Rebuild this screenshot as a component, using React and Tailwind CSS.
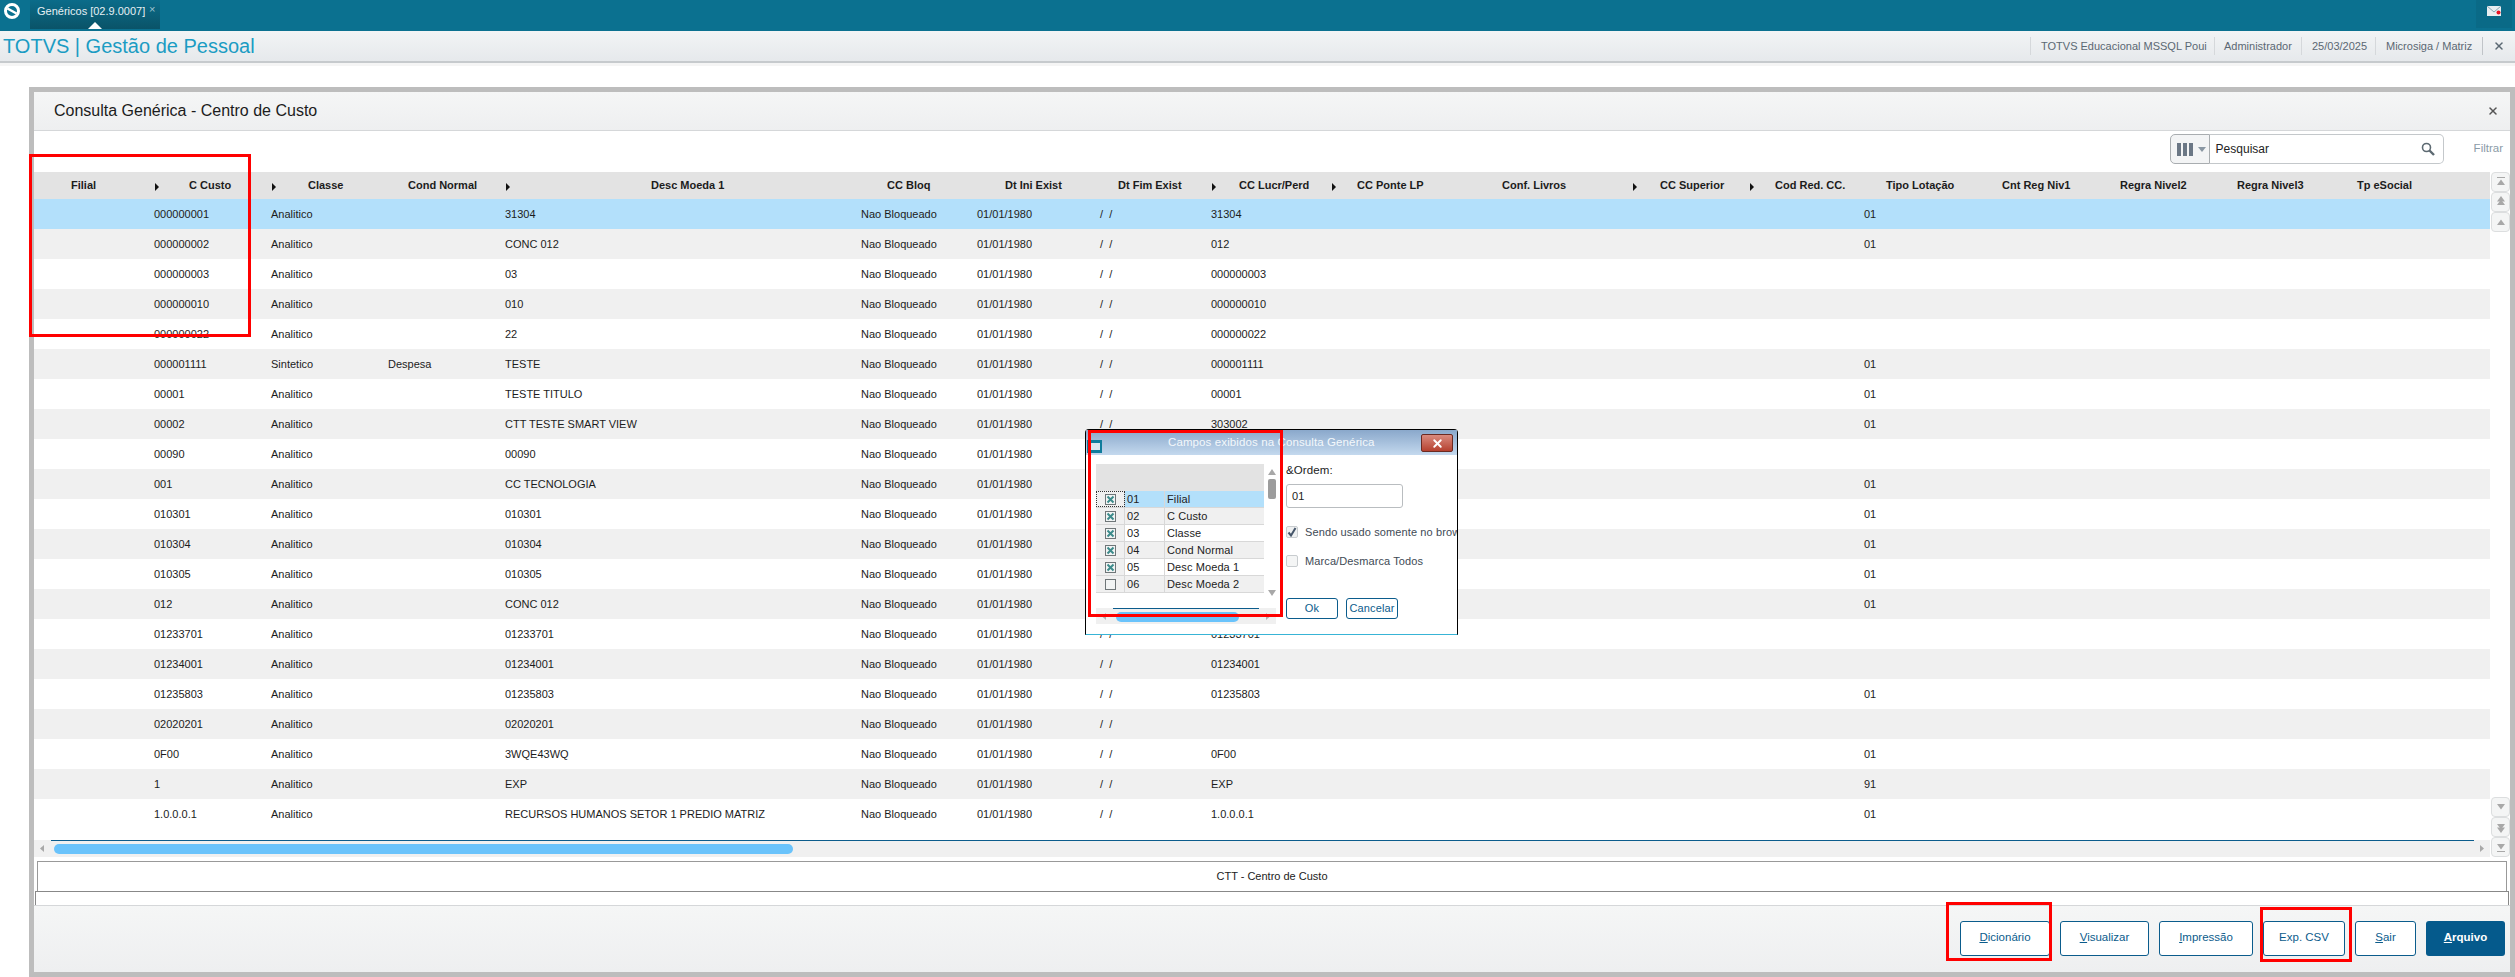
import { X } from 'lucide-react';

const columns = [
    { name: 'Filial', track: 'pl-[37px]' },
    { name: 'C Custo', track: 'pl-[37px]', caret: true },
    { name: 'Classe', track: 'pl-[39px]', caret: true },
    { name: 'Cond Normal', track: 'pl-[22px]' },
    { name: 'Desc Moeda 1', track: 'pl-[148px]', caret: true },
    { name: 'CC Bloq', track: 'pl-[28px]' },
    { name: 'Dt Ini Exist', track: 'pl-[30px]' },
    { name: 'Dt Fim Exist', track: 'pl-[20px]' },
    { name: 'CC Lucr/Perd', track: 'pl-[30px]', caret: true },
    { name: 'CC Ponte LP', track: 'pl-[28px]', caret: true },
    { name: 'Conf. Livros', track: 'pl-[55px]' },
    { name: 'CC Superior', track: 'pl-[30px]', caret: true },
    { name: 'Cod Red. CC.', track: 'pl-[28px]', caret: true },
    { name: 'Tipo Lotação', track: 'pl-[24px]' },
    { name: 'Cnt Reg Niv1', track: 'pl-[23px]' },
    { name: 'Regra Nivel2', track: 'pl-[24px]' },
    { name: 'Regra Nivel3', track: 'pl-[24px]' },
    { name: 'Tp eSocial', track: 'pl-[27px]' },
];

const gridCols =
    'grid grid-cols-[118px_117px_117px_117px_356px_116px_123px_111px_120px_118px_183px_117px_115px_117px_117px_117px_117px_160px]';

// codigo, classe, cond, descricao, lucr/perd, tipo lotacao
const rows = [
    ['000000001', 'Analitico', '', '31304', '31304', '01'],
    ['000000002', 'Analitico', '', 'CONC 012', '012', '01'],
    ['000000003', 'Analitico', '', '03', '000000003', ''],
    ['000000010', 'Analitico', '', '010', '000000010', ''],
    ['000000022', 'Analitico', '', '22', '000000022', ''],
    ['000001111', 'Sintetico', 'Despesa', 'TESTE', '000001111', '01'],
    ['00001', 'Analitico', '', 'TESTE TITULO', '00001', '01'],
    ['00002', 'Analitico', '', 'CTT TESTE SMART VIEW', '303002', '01'],
    ['00090', 'Analitico', '', '00090', '', ''],
    ['001', 'Analitico', '', 'CC TECNOLOGIA', '', '01'],
    ['010301', 'Analitico', '', '010301', '', '01'],
    ['010304', 'Analitico', '', '010304', '', '01'],
    ['010305', 'Analitico', '', '010305', '', '01'],
    ['012', 'Analitico', '', 'CONC 012', '', '01'],
    ['01233701', 'Analitico', '', '01233701', '01233701', ''],
    ['01234001', 'Analitico', '', '01234001', '01234001', ''],
    ['01235803', 'Analitico', '', '01235803', '01235803', '01'],
    ['02020201', 'Analitico', '', '02020201', '', ''],
    ['0F00', 'Analitico', '', '3WQE43WQ', '0F00', '01'],
    ['1', 'Analitico', '', 'EXP', 'EXP', '91'],
    ['1.0.0.0.1', 'Analitico', '', 'RECURSOS HUMANOS SETOR 1 PREDIO MATRIZ', '1.0.0.0.1', '01'],
];

const campos = [
    ['01', 'Filial', true],
    ['02', 'C Custo', true],
    ['03', 'Classe', true],
    ['04', 'Cond Normal', true],
    ['05', 'Desc Moeda 1', true],
    ['06', 'Desc Moeda 2', false],
];

function Caret() {
    return (
        <svg width="5" height="8" viewBox="0 0 5 8" className="absolute left-[3px] top-[11px]">
            <polygon points="0,0 4,4 0,8" fill="#111" />
        </svg>
    );
}

function ScrollBtn({ dir, double, bar }) {
    const flip = dir === 'down' ? 'rotate-180' : '';
    return (
        <div className="w-[19px] h-[20px] bg-[#f4f5f5] border border-[#dcdedf] flex items-center justify-center rounded-sm">
            <svg width="8" height="12" viewBox="0 0 8 12" className={flip}>
                {bar && <rect x="0" y="1" width="8" height="1" fill="#a8a8a8" />}
                <polygon points="4,3.5 8,9 0,9" fill="#a8a8a8" />
                {double && <polygon points="4,0 8,5.5 0,5.5" fill="#a8a8a8" />}
            </svg>
        </div>
    );
}

function Botao({ label, sublinha, largura }) {
    return (
        <button className={`h-[35px] ${largura} bg-white border border-[#0b5c8c] rounded-[3px] text-[11.5px] text-[#0b5c8c]`}>
            <span className="underline">{sublinha}</span>
            {label}
        </button>
    );
}

function Marca({ checked }) {
    return (
        <svg width="11" height="11" viewBox="0 0 11 11">
            <rect x="0.5" y="0.5" width="10" height="10" fill="#f2f4f4" stroke="#6f7678" />
            {checked && (
                <path d="M2.5 2.5 L8.5 8.5 M8.5 2.5 L2.5 8.5" stroke="#3d8b8b" strokeWidth="2" />
            )}
        </svg>
    );
}

function Dialogo() {
    return (
        <div className="absolute left-[1085px] top-[429px] w-[373px] h-[206px] bg-white border border-black border-b-[#38b4d6] rounded-t-[4px] text-[11px] tracking-[0.01em] text-[#222]">
            <div className="h-[25px] bg-gradient-to-b from-[#8aa8cb] to-[#c4d9ee] relative flex items-center pl-[82px] text-[11.5px] text-[#f4f8fb] font-medium">
                Campos exibidos na Consulta Genérica
                <div className="absolute left-[1px] top-[10px] w-[15px] h-[13px] bg-[#0f7c9c] flex items-center justify-center">
                    <div className="w-[11px] h-[7px] bg-[#dbe6ee]" />
                </div>
                <div className="absolute left-[335px] top-[4px] w-[32px] h-[18px] bg-gradient-to-b from-[#d98a7e] to-[#b5402f] border border-[#6b2a22] rounded-[2px] flex items-center justify-center">
                    <X className="w-[13px] h-[13px] text-white" strokeWidth={3.5} />
                </div>
            </div>
            <div className="flex pl-[10px] pt-[9px]">
                <div className="w-[180px]">
                    <div className="flex h-[144px]">
                        <div className="w-[168px]">
                            <div className="h-[27px] bg-[#e3e3e3]" />
                            {campos.map(([num, nome, marcado], i) => (
                                <div
                                    key={num}
                                    className={`h-[17px] flex items-center border-b border-[#d8d8d8] ${
                                        i === 0 ? 'bg-[#b3e0fb]' : i % 2 === 1 ? 'bg-[#f0f0f0]' : 'bg-white'
                                    }`}
                                >
                                    <div
                                        className={`w-[29px] h-full flex items-center justify-center bg-[#f0f0f0] border-r border-[#d8d8d8] ${
                                            i === 0 ? 'outline-1 outline-dotted outline-[#333] -outline-offset-1' : ''
                                        }`}
                                    >
                                        <Marca checked={marcado} />
                                    </div>
                                    <div className="w-[40px] h-full flex items-center pl-[2px] border-r border-[#d8d8d8]">{num}</div>
                                    <div className="pl-[2px]">{nome}</div>
                                </div>
                            ))}
                        </div>
                        <div className="w-[12px] flex flex-col items-center pl-[3px]">
                            <svg width="8" height="6" viewBox="0 0 8 6" className="mt-[5px]">
                                <polygon points="4,0 8,6 0,6" fill="#a8a8a8" />
                            </svg>
                            <div className="w-[8px] h-[20px] bg-[#9c9c9c] rounded-[2px] mt-[4px]" />
                            <svg width="8" height="6" viewBox="0 0 8 6" className="mt-[91px]">
                                <polygon points="0,0 8,0 4,6" fill="#a8a8a8" />
                            </svg>
                        </div>
                    </div>
                    <div className="relative h-[16px] bg-[#f0f0f0] flex items-center justify-between px-[6px]">
                        <div className="absolute left-[17px] right-[17px] top-0 h-px bg-[#0b5c8c]" />
                        <svg width="4" height="7" viewBox="0 0 4 7">
                            <polygon points="0,3.5 4,0 4,7" fill="#b0b0b0" />
                        </svg>
                        <div className="absolute left-[20px] top-[4px] w-[123px] h-[10px] bg-[#6ac3fb] rounded-full" />
                        <svg width="4" height="7" viewBox="0 0 4 7">
                            <polygon points="4,3.5 0,0 0,7" fill="#b0b0b0" />
                        </svg>
                    </div>
                </div>
                <div className="ml-[10px] flex-1 overflow-hidden whitespace-nowrap">
                    <div className="text-[11.5px] leading-[12px]">&amp;Ordem:</div>
                    <div className="w-[117px] h-[24px] mt-[8px] border border-[#b9bdc0] rounded-[3px] flex items-center pl-[5px]">01</div>
                    <div className="flex items-center mt-[18px] h-[12px]">
                        <div className="w-[12px] h-[12px] bg-[#eef0f1] border border-[#c8cccf] rounded-[2px] flex items-center justify-center">
                            <svg width="10" height="10" viewBox="0 0 10 10">
                                <path d="M1.5 5.5 L4 8.5 L8.5 1" fill="none" stroke="#46566a" strokeWidth="2" />
                            </svg>
                        </div>
                        <span className="ml-[7px] text-[#3e4a55]">Sendo usado somente no brow</span>
                    </div>
                    <div className="flex items-center mt-[17px] h-[12px]">
                        <div className="w-[12px] h-[12px] bg-[#f4f5f5] border border-[#c8cccf] rounded-[2px]" />
                        <span className="ml-[7px] text-[#3e4a55]">Marca/Desmarca Todos</span>
                    </div>
                    <div className="flex gap-[8px] mt-[31px]">
                        <button className="w-[52px] h-[21px] border border-[#0b5c8c] rounded-[3px] text-[#0b5c8c] text-[11px]">Ok</button>
                        <button className="w-[52px] h-[21px] border border-[#0b5c8c] rounded-[3px] text-[#0b5c8c] text-[11px]">Cancelar</button>
                    </div>
                </div>
            </div>
        </div>
    );
}

export default function App() {
    return (
        <div className="relative w-[2515px] h-[977px] overflow-hidden bg-white flex flex-col font-['Liberation_Sans',Arial,sans-serif]">
            {/* barra superior */}
            <div className="h-[31px] bg-[#0b7190] flex justify-between shrink-0">
                <div className="flex">
                    <div className="w-[30px] flex items-center justify-center pb-[9px] pr-[7px]">
                        <svg width="18" height="18" viewBox="0 0 18 18">
                            <circle cx="9" cy="9" r="6.5" fill="none" stroke="white" strokeWidth="3" />
                            <path d="M4.5 6.5 L13.5 11.5" stroke="white" strokeWidth="2.5" />
                        </svg>
                    </div>
                    <div className="relative w-[130px] h-[29px] bg-gradient-to-b from-[#0b6c8a] to-[#0a5368] pl-[7px] pt-[4px] text-[11px] leading-[14px] text-[#e6f0f4] whitespace-nowrap">
                        Genéricos [02.9.0007]
                        <span className="absolute left-[119px] top-[2px] text-[11px] text-[#9fc3d0]">×</span>
                        <svg width="14" height="7" viewBox="0 0 14 7" className="absolute left-[58px] bottom-0">
                            <polygon points="7,0 14,7 0,7" fill="white" />
                        </svg>
                    </div>
                </div>
                <div className="w-[36px] h-[28px] mr-[3px] bg-[#0a6a87] flex items-center justify-center pb-[6px]">
                    <svg width="16" height="12" viewBox="0 0 16 12">
                        <rect x="1" y="1" width="14" height="10" fill="#e8eef1" />
                        <path d="M1 1 L8 7 L15 1" fill="none" stroke="#8aa6b3" strokeWidth="1" />
                        <circle cx="12.5" cy="7.5" r="2" fill="#e81123" />
                    </svg>
                </div>
            </div>

            {/* cabecalho */}
            <div className="h-[32px] shrink-0 bg-gradient-to-b from-[#f2f4f5] to-[#e6e9ec] border-b-2 border-[#c6cacd] flex items-center justify-between">
                <div className="pl-[3px] text-[20px] text-[#1b9cc3] whitespace-nowrap">TOTVS | Gestão de Pessoal</div>
                <div className="flex items-center text-[11px] text-[#5b6873] whitespace-nowrap">
                    <div className="h-[18px] w-[184px] flex items-center border-l border-[#d5d8db] pl-[10px]">TOTVS Educacional MSSQL Poui</div>
                    <div className="h-[18px] w-[87px] flex items-center border-l border-[#d5d8db] pl-[9px]">Administrador</div>
                    <div className="h-[18px] w-[74px] flex items-center border-l border-[#d5d8db] pl-[10px]">25/03/2025</div>
                    <div className="h-[18px] w-[107px] flex items-center border-l border-[#d5d8db] pl-[10px]">Microsiga / Matriz</div>
                    <div className="h-[18px] w-[33px] flex items-center justify-center border-l border-[#c0c4c8]">
                        <X className="w-[12px] h-[12px] text-[#5b6873]" strokeWidth={3} />
                    </div>
                </div>
            </div>
            <div className="h-[3px] bg-[#f5f5f5] shrink-0" />
            <div className="h-[21px] shrink-0" />

            {/* painel da consulta */}
            <div className="flex-1 ml-[29px] border-[5px] border-[#bdbdbd] flex flex-col min-h-0">
                <div className="h-[39px] shrink-0 bg-gradient-to-b from-[#f5f6f6] to-[#eeeff0] border-b border-[#d5d7d9] flex items-center justify-between pl-[20px] pr-[11px]">
                    <span className="text-[16px] text-[#1c1c1c]">Consulta Genérica - Centro de Custo</span>
                    <X className="w-[12px] h-[12px] text-[#555]" strokeWidth={3} />
                </div>

                <div className="h-[41px] shrink-0 bg-white flex items-center justify-end pb-[5px] pr-[1px]">
                    <div className="flex h-[30px] w-[274px]">
                        <div className="w-[40px] bg-[#f3f4f5] border border-[#a9adb0] rounded-l-[5px] flex items-center pl-[6px] gap-[3px]">
                            <div className="flex gap-[2px]">
                                <div className="w-[4px] h-[13px] bg-[#6b7785]" />
                                <div className="w-[4px] h-[13px] bg-[#6b7785]" />
                                <div className="w-[4px] h-[13px] bg-[#6b7785]" />
                            </div>
                            <svg width="8" height="5" viewBox="0 0 8 5" className="ml-[2px]">
                                <polygon points="0,0 8,0 4,5" fill="#8a97a3" />
                            </svg>
                        </div>
                        <div className="flex-1 border border-l-0 border-[#c4c8cb] rounded-r-[5px] flex items-center justify-between pl-[6px] pr-[8px] text-[12px] text-[#222]">
                            Pesquisar
                            <svg width="14" height="14" viewBox="0 0 14 14">
                                <circle cx="5.5" cy="5.5" r="4" fill="none" stroke="#5d6a72" strokeWidth="1.6" />
                                <path d="M8.5 8.5 L13 13" stroke="#5d6a72" strokeWidth="2.4" />
                            </svg>
                        </div>
                    </div>
                    <span className="ml-[30px] mr-[6px] text-[11.5px] text-[#8b9ba7]">Filtrar</span>
                </div>

                {/* grade */}
                <div className="h-[685px] shrink-0 flex">
                    <div className="w-[2456px] flex flex-col">
                        <div className={`${gridCols} h-[27px] bg-[#e3e3e3] text-[11px] font-bold text-[#1c1c1c]`}>
                            {columns.map((col) => (
                                <div key={col.name} className={`relative flex items-center whitespace-nowrap ${col.track}`}>
                                    {col.caret && <Caret />}
                                    {col.name}
                                </div>
                            ))}
                        </div>
                        <div className="h-[641px] text-[11px] text-[#1c1c1c]">
                            {rows.map((row, i) => (
                                <div
                                    key={row[0]}
                                    className={`${gridCols} h-[30px] items-center ${
                                        i === 0 ? 'bg-[#b3e0fb]' : i % 2 === 1 ? 'bg-[#f0f0f0]' : 'bg-white'
                                    }`}
                                >
                                    <div />
                                    <div className="pl-[2px]">{row[0]}</div>
                                    <div className="pl-[2px]">{row[1]}</div>
                                    <div className="pl-[2px]">{row[2]}</div>
                                    <div className="pl-[2px]">{row[3]}</div>
                                    <div className="pl-[2px]">Nao Bloqueado</div>
                                    <div className="pl-[2px]">01/01/1980</div>
                                    <div className="pl-[2px] whitespace-pre">/  /</div>
                                    <div className="pl-[2px]">{row[4]}</div>
                                    <div />
                                    <div />
                                    <div />
                                    <div />
                                    <div className="pl-[2px]">{row[5]}</div>
                                </div>
                            ))}
                        </div>
                        <div className="relative h-[17px] bg-[#f0f0f0] flex items-center justify-between px-[6px]">
                            <div className="absolute left-[17px] right-[16px] top-0 h-px bg-[#0b5c8c]" />
                            <svg width="4" height="7" viewBox="0 0 4 7">
                                <polygon points="0,3.5 4,0 4,7" fill="#a8a8a8" />
                            </svg>
                            <div className="absolute left-[20px] top-[4px] w-[739px] h-[10px] bg-[#6ac3fb] rounded-full" />
                            <svg width="4" height="7" viewBox="0 0 4 7">
                                <polygon points="4,3.5 0,0 0,7" fill="#a8a8a8" />
                            </svg>
                        </div>
                    </div>
                    <div className="w-[20px] bg-white flex flex-col justify-between pl-[1px]">
                        <div>
                            <ScrollBtn dir="up" bar />
                            <ScrollBtn dir="up" double />
                            <ScrollBtn dir="up" />
                        </div>
                        <div>
                            <ScrollBtn dir="down" />
                            <ScrollBtn dir="down" double />
                            <ScrollBtn dir="down" bar />
                        </div>
                    </div>
                </div>

                <div className="h-[4px] shrink-0" />
                <div className="h-[30px] shrink-0 mx-[3px] border border-b-0 border-[#999] flex items-center justify-center text-[11px] text-[#222]">
                    CTT - Centro de Custo
                </div>
                <div className="h-[14px] shrink-0 mx-[1px] border border-b-0 border-[#888]" />

                {/* botoes */}
                <div className="flex-1 bg-gradient-to-b from-[#f5f6f6] to-[#eeeff0] border-t border-[#d5d7d9] flex items-center justify-end gap-[10px] pr-[5px] pb-[2px]">
                    <Botao largura="w-[90px]" sublinha="D" label="icionário" />
                    <Botao largura="w-[89px]" sublinha="V" label="isualizar" />
                    <Botao largura="w-[94px]" sublinha="I" label="mpressão" />
                    <Botao largura="w-[82px]" sublinha="" label="Exp. CSV" />
                    <Botao largura="w-[61px]" sublinha="S" label="air" />
                    <button className="h-[35px] w-[79px] bg-[#055a8c] rounded-[3px] text-[11.5px] font-bold text-white">
                        <span className="underline">A</span>rquivo
                    </button>
                </div>
            </div>

            <Dialogo />

            {/* marcacoes em vermelho */}
            <div className="absolute left-[29px] top-[154px] w-[222px] h-[183px] border-[3px] border-[#ff0000]" />
            <div className="absolute left-[1088px] top-[430px] w-[195px] h-[187px] border-[3px] border-[#ff0000]" />
            <div className="absolute left-[1946px] top-[902px] w-[106px] h-[59px] border-[3px] border-[#ff0000]" />
            <div className="absolute left-[2260px] top-[907px] w-[92px] h-[55px] border-[3px] border-[#ff0000]" />
        </div>
    );
}
